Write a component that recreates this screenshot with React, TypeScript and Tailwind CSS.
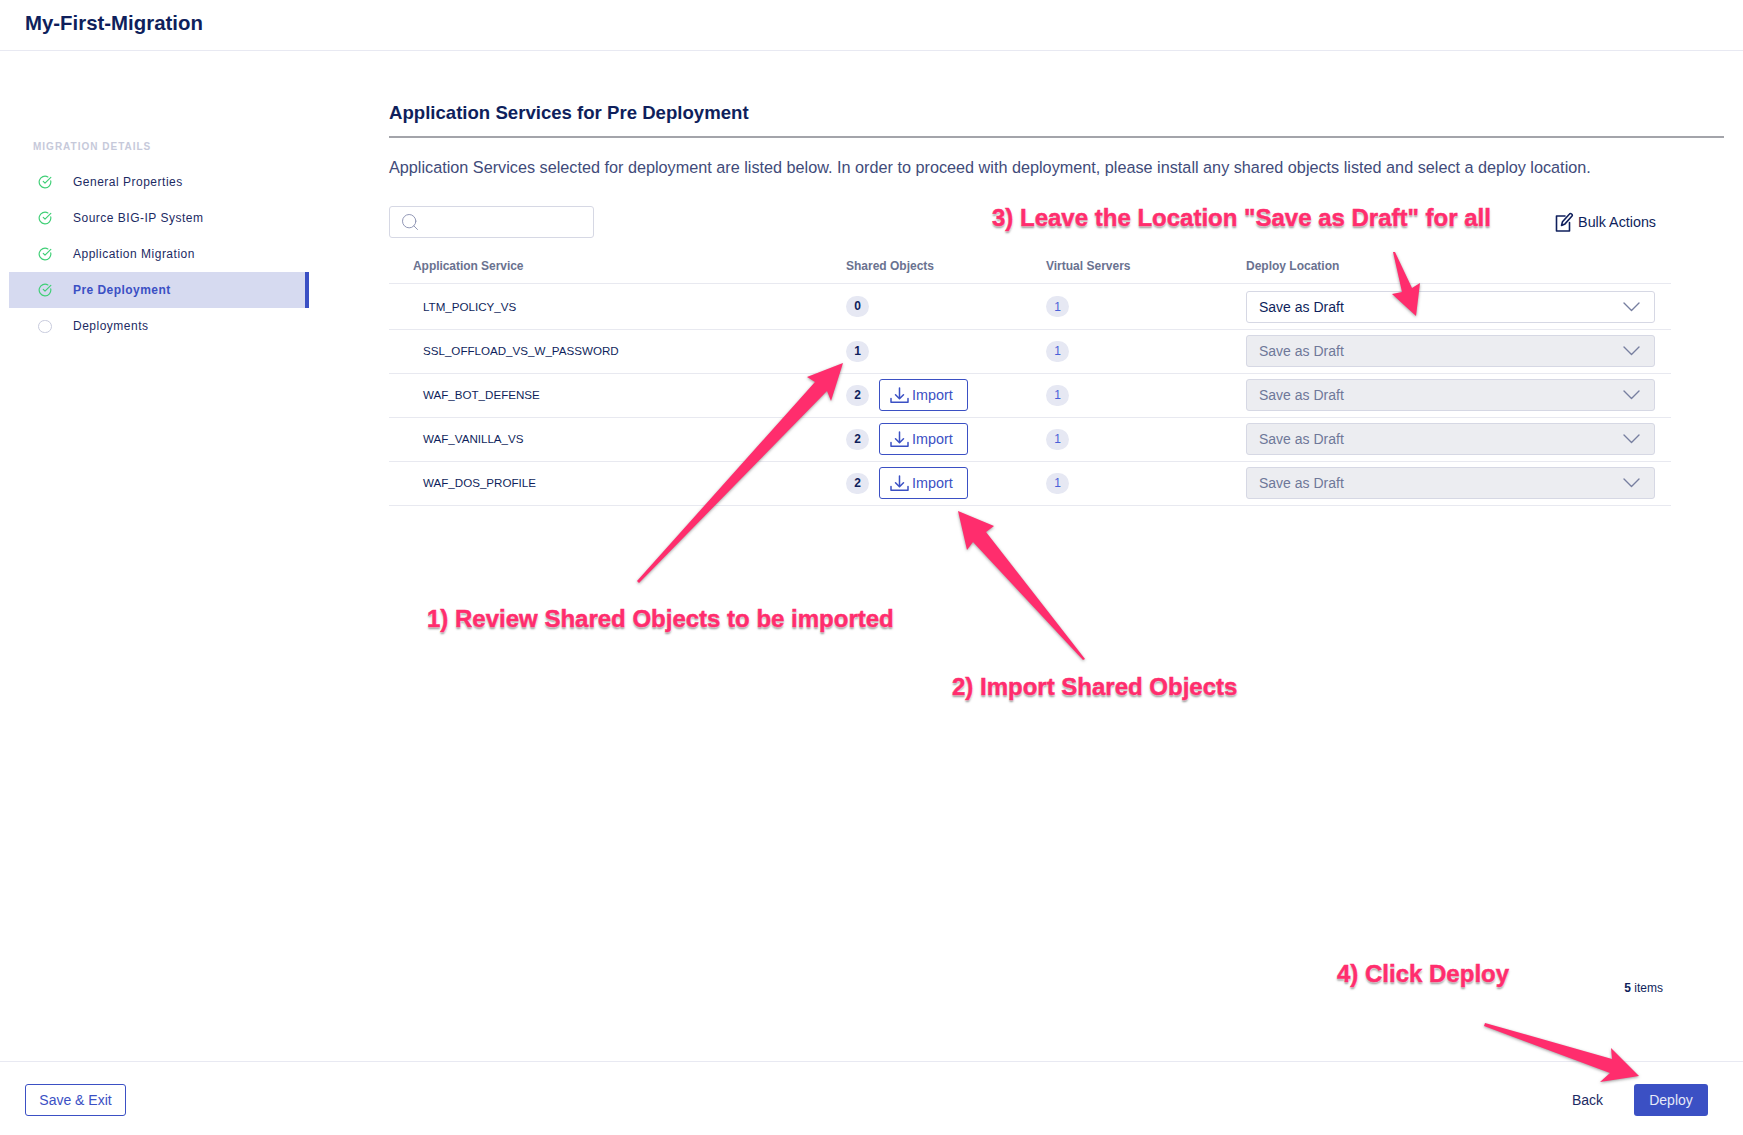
import React from "react";
import { CircleCheckBig, Search } from "lucide-react";

const steps = [
  { label: "General Properties", done: true },
  { label: "Source BIG-IP System", done: true },
  { label: "Application Migration", done: true },
  { label: "Pre Deployment", done: true, active: true },
  { label: "Deployments", done: false },
];

const rows = [
  { name: "LTM_POLICY_VS", shared: 0, enabled: true },
  { name: "SSL_OFFLOAD_VS_W_PASSWORD", shared: 1 },
  { name: "WAF_BOT_DEFENSE", shared: 2, importable: true },
  { name: "WAF_VANILLA_VS", shared: 2, importable: true },
  { name: "WAF_DOS_PROFILE", shared: 2, importable: true },
];

function ImportIcon() {
  return (
    <svg width="19" height="17" viewBox="0 0 19 17" fill="none" stroke="#3b50c4" strokeWidth="1.5" strokeLinecap="round" strokeLinejoin="round">
      <path d="M9.5 1v10.5M5.5 7.8l4 4 4-4" />
      <path d="M1 11.5v3.7h17v-3.7" />
    </svg>
  );
}

function BulkIcon() {
  return (
    <svg width="19" height="20" viewBox="0 0 19 20" fill="none" stroke="#0f1f5c" strokeWidth="1.6" strokeLinecap="round" strokeLinejoin="round">
      <path d="M10 4H1.5v15H14.5V10.5" />
      <path d="M6.5 13.5l1-3.7 6.8-7.6a1.6 1.6 0 012.5 2.1l-6.8 7.6z" />
    </svg>
  );
}

function Chevron() {
  return (
    <svg width="17" height="10" viewBox="0 0 17 10" fill="none" stroke="#777fa0" strokeWidth="1.4" strokeLinecap="round" strokeLinejoin="round">
      <path d="M1 1l7.5 7.5L16 1" />
    </svg>
  );
}

function Annotation({ className, children }: { className: string; children: React.ReactNode }) {
  return (
    <div
      className={
        "absolute whitespace-nowrap text-[24px] leading-[28px] font-bold text-[#ff2d6d] [-webkit-text-stroke:0.5px_#ff2d6d] [text-shadow:0_0_2px_#fff,0_0_3px_#fff,0_2px_2px_rgba(60,60,60,0.6)] " +
        className
      }
    >
      {children}
    </div>
  );
}

export default function App() {
  return (
    <div className="relative flex h-[1135px] w-[1743px] flex-col overflow-hidden bg-white font-['Liberation_Sans',Arial,sans-serif] text-[#0f1f5c]">
      <header className="flex h-[51px] shrink-0 items-center border-b border-[#e8e9f2] pl-[25px] pb-[5px]">
        <h1 className="text-[20.4px] leading-[26px] font-bold text-[#0f1f5c]">My-First-Migration</h1>
      </header>

      <div className="flex min-h-0 flex-1">
        <aside className="w-[389px] shrink-0 pl-[9px] pt-[89px]">
          <div className="mb-[10px] pl-[24px] text-[10px] leading-[14px] font-semibold tracking-[1px] text-[#c6c9da]">
            MIGRATION DETAILS
          </div>
          <ul className="w-[300px]">
            {steps.map((s) => (
              <li
                key={s.label}
                className={
                  s.active
                    ? "flex h-9 items-center border-r-4 border-[#3b50c4] bg-[#d6daf0] pl-[29px] text-[12px] font-bold tracking-[0.45px] text-[#3b50c4]"
                    : "flex h-9 items-center pl-[29px] text-[12px] tracking-[0.5px] text-[#1c2a63]"
                }
              >
                {s.done ? (
                  <CircleCheckBig size={14} strokeWidth={2} className="mr-[21px] text-[#3fcf76]" />
                ) : (
                  <span className="mr-[21px] h-[13px] w-[14px] rounded-full border-[1.5px] border-[#c8cbdd]" />
                )}
                <span>{s.label}</span>
              </li>
            ))}
          </ul>
        </aside>

        <main className="flex min-w-0 flex-1 flex-col pr-[19px] pt-[51px]">
          <h2 className="border-b-2 border-[#a3a4aa] pb-[12px] text-[18.6px] leading-[22px] font-bold text-[#0f1f5c]">
            Application Services for Pre Deployment
          </h2>
          <p className="mt-[19px] text-[16.23px] leading-[20px] text-[#414b7a]">
            Application Services selected for deployment are listed below. In order to proceed with deployment, please install any shared objects listed and select a deploy location.
          </p>

          <div className="mt-[29px] flex w-[1282px] items-center justify-between pr-[15px]">
            <div className="flex h-8 w-[205px] items-center rounded-[3px] border border-[#d6d8e4] pl-[10px]">
              <Search size={20} strokeWidth={1.15} className="text-[#8d93b3]" />
            </div>
            <div className="flex items-center gap-[4px] text-[14.3px] leading-[18px] text-[#0f1f5c]">
              <BulkIcon />
              <span>Bulk Actions</span>
            </div>
          </div>

          <div className="w-[1282px]">
            <div className="flex h-[46px] items-center border-b border-[#e8e9f0] pt-[10px] text-[12px] font-semibold text-[#6a7290]">
              <div className="w-[457px] pl-[24px] tracking-[-0.05px]">Application Service</div>
              <div className="w-[200px]">Shared Objects</div>
              <div className="w-[200px]">Virtual Servers</div>
              <div>Deploy Location</div>
            </div>
            {rows.map((r, i) => (
              <div
                key={r.name}
                className={
                  i === 0
                    ? "flex h-[46px] items-center border-b border-[#e8e9f0] text-[11.6px]"
                    : "flex h-[44px] items-center border-b border-[#e8e9f0] pb-[1px] text-[11.6px]"
                }
              >
                <div className="w-[457px] pl-[34px] text-[#0f1f5c]">{r.name}</div>
                <div className="flex w-[200px] items-center">
                  <span className="flex h-[21px] w-[23px] items-center justify-center rounded-full bg-[#e6e8f3] pb-[1px] text-[12px] font-bold text-[#0f1f5c]">
                    {r.shared}
                  </span>
                  {r.importable && (
                    <button className="ml-[10px] flex h-8 w-[89px] items-center gap-[3px] rounded-[3px] border border-[#3b50c4] pl-[10px] text-[14.4px] text-[#3b50c4]">
                      <ImportIcon />
                      <span className="pt-[1px]">Import</span>
                    </button>
                  )}
                </div>
                <div className="w-[200px]">
                  <span className="flex h-[21px] w-[23px] items-center justify-center rounded-full bg-[#e6e8f3] text-[12px] text-[#4a60d8]">
                    1
                  </span>
                </div>
                <div
                  className={
                    r.enabled
                      ? "flex h-8 w-[409px] items-center justify-between rounded-[3px] border border-[#d6d8e4] bg-white pl-[12px] pr-[14px] text-[14px] text-[#0f1f5c]"
                      : "flex h-8 w-[409px] items-center justify-between rounded-[3px] border border-[#d6d8e4] bg-[#ecedf1] pl-[12px] pr-[14px] text-[14px] text-[#6f7899]"
                  }
                >
                  <span className="pt-[1px]">Save as Draft</span>
                  <Chevron />
                </div>
              </div>
            ))}
          </div>

          <div className="mt-auto mb-[66px] pr-[61px] text-right text-[12px] leading-[14px] text-[#0f1f5c]">
            <b>5</b> items
          </div>
        </main>
      </div>

      <footer className="flex h-[74px] shrink-0 items-start justify-between border-t border-[#e8e9f2] pl-[25px] pr-[35px] pt-[22px]">
        <button className="h-8 w-[101px] rounded-[3px] border border-[#3b50c4] text-[14px] text-[#3b50c4]">Save &amp; Exit</button>
        <div className="flex items-center gap-[31px]">
          <button className="text-[14px] text-[#1c2a63]">Back</button>
          <button className="h-8 w-[74px] rounded-[3px] bg-[#3b50c4] text-[14px] text-[#e6e9f8]">Deploy</button>
        </div>
      </footer>

      <svg className="pointer-events-none absolute inset-0" width="1743" height="1135" viewBox="0 0 1743 1135" fill="#ff2d6d" style={{ filter: "drop-shadow(0 1px 1.5px rgba(60,60,60,0.5))" }}>
        <polygon points="843,363 807,377 815,382 637,581 639,583 827,391 831,401" />
        <polygon points="958,511 994,526 986,532 1085,659 1083,660 973,542 967,550" />
        <polygon points="1393,252 1395,252 1412,288 1420,283 1416,316 1392,294 1402,292" />
        <polygon points="1639,1076 1611,1048 1612,1059 1485,1023 1484,1026 1610,1073 1600,1082" />
      </svg>

      <Annotation className="left-[992px] top-[204px]">3) Leave the Location "Save as Draft" for all</Annotation>
      <Annotation className="left-[427px] top-[605px]">1) Review Shared Objects to be imported</Annotation>
      <Annotation className="left-[952px] top-[673px]">2) Import Shared Objects</Annotation>
      <Annotation className="left-[1337px] top-[960px]">4) Click Deploy</Annotation>
    </div>
  );
}
